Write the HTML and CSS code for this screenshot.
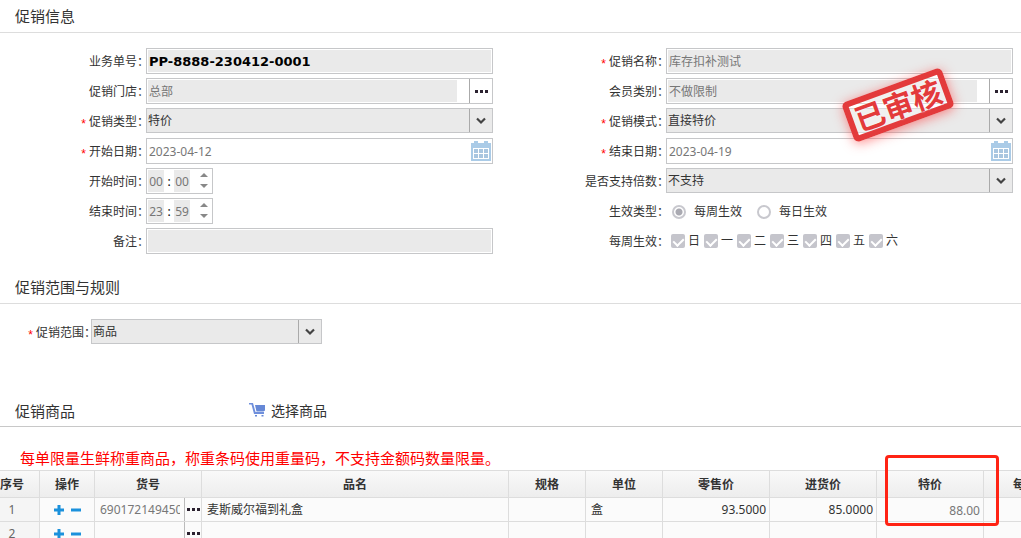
FILE: index.html
```html
<!DOCTYPE html>
<html lang="zh-CN">
<head>
<meta charset="utf-8">
<title>促销单</title>
<link rel="stylesheet" href="styles.css">
</head>
<body>
<svg class="defs" aria-hidden="true">
  <symbol id="chevron" viewBox="0 0 10 8"><path d="M1 1.500 5 5.500 9 1.500" fill="none" stroke="#444" stroke-width="2.200"/></symbol>
  <symbol id="dots" viewBox="0 0 13 3"><path d="M0 0h3v3H0zM5 0h3v3H5zM10 0h3v3h-3z" fill="#2b2230"/></symbol>
  <symbol id="calendar" viewBox="0 0 20 20"><path d="M0 2h3V0h4v2h6V0h4v2h3v18H0z" fill="#aacbe7"/><path d="M2 7h16v11H2z" fill="#fff"/><path d="M3 8h4v4H3zM8 8h4v4H8zM13 8h4v4h-4zM3 13h4v4H3zM8 13h4v4H8zM13 13h4v4h-4z" fill="#a9c6e0"/></symbol>
  <symbol id="up" viewBox="0 0 8 4"><path d="M0 4 4 0l4 4z" fill="#888"/></symbol>
  <symbol id="down" viewBox="0 0 8 4"><path d="M0 0h8L4 4z" fill="#888"/></symbol>
  <symbol id="plus" viewBox="0 0 10 10"><path d="M3.500 0h3v3.500H10v3H6.500V10h-3V6.500H0v-3h3.500z" fill="#1b91dc"/></symbol>
  <symbol id="minus" viewBox="0 0 10 10"><path d="M0 3.500h10v3H0z" fill="#1b91dc"/></symbol>
</svg>

<main class="page">
  <section class="info">
    <h2 class="title">促销信息</h2>
    <form class="form">
      <div class="col">
        <div class="row"><label class="label" for="no">业务单号：</label><div class="box"><input class="fill strong" id="no" value="PP-8888-230412-0001" readonly></div></div>
        <div class="row"><label class="label" for="store">促销门店：</label><div class="box"><input class="fill" id="store" value="总部" readonly><button class="more" type="button" aria-label="选择门店"><svg class="dots"><use href="#dots"/></svg></button></div></div>
        <div class="row"><label class="label" for="type"><span class="req">*</span>促销类型：</label><div class="pick"><select class="select" id="type"><option>特价</option></select><span class="arrow"><svg class="chevron"><use href="#chevron"/></svg></span></div></div>
        <div class="row"><label class="label" for="start"><span class="req">*</span>开始日期：</label><div class="box"><input class="fill plain" id="start" value="2023-04-12" readonly><button class="date" type="button" aria-label="选择开始日期"><svg class="cal"><use href="#calendar"/></svg></button></div></div>
        <div class="row"><label class="label" for="sh">开始时间：</label><div class="box time"><input class="num" id="sh" value="00" readonly><span class="sep">:</span><input class="num" aria-label="开始分钟" value="00" readonly><span class="spin"><button type="button" aria-label="增加"><svg><use href="#up"/></svg></button><button type="button" aria-label="减少"><svg><use href="#down"/></svg></button></span></div></div>
        <div class="row"><label class="label" for="eh">结束时间：</label><div class="box time"><input class="num" id="eh" value="23" readonly><span class="sep">:</span><input class="num" aria-label="结束分钟" value="59" readonly><span class="spin"><button type="button" aria-label="增加"><svg><use href="#up"/></svg></button><button type="button" aria-label="减少"><svg><use href="#down"/></svg></button></span></div></div>
        <div class="row"><label class="label" for="memo">备注：</label><div class="box"><input class="fill" id="memo" readonly></div></div>
      </div>
      <div class="col">
        <div class="row"><label class="label" for="name"><span class="req">*</span>促销名称：</label><div class="box"><input class="fill" id="name" value="库存扣补测试" readonly></div></div>
        <div class="row"><label class="label" for="member">会员类别：</label><div class="box"><input class="fill" id="member" value="不做限制" readonly><button class="more" type="button" aria-label="选择会员类别"><svg class="dots"><use href="#dots"/></svg></button></div></div>
        <div class="row"><label class="label" for="mode"><span class="req">*</span>促销模式：</label><div class="pick"><select class="select" id="mode"><option>直接特价</option></select><span class="arrow"><svg class="chevron"><use href="#chevron"/></svg></span></div></div>
        <div class="row"><label class="label" for="end"><span class="req">*</span>结束日期：</label><div class="box"><input class="fill plain" id="end" value="2023-04-19" readonly><button class="date" type="button" aria-label="选择结束日期"><svg class="cal"><use href="#calendar"/></svg></button></div></div>
        <div class="row"><label class="label" for="multi">是否支持倍数：</label><div class="pick"><select class="select" id="multi"><option>不支持</option></select><span class="arrow"><svg class="chevron"><use href="#chevron"/></svg></span></div></div>
        <div class="row"><span class="label">生效类型：</span><div class="radios"><label><input class="radio" type="radio" name="effect" checked disabled>每周生效</label><label><input class="radio" type="radio" name="effect" disabled>每日生效</label></div></div>
        <div class="row"><span class="label">每周生效：</span><div class="days"><label><input class="check" type="checkbox" checked disabled>日</label><label><input class="check" type="checkbox" checked disabled>一</label><label><input class="check" type="checkbox" checked disabled>二</label><label><input class="check" type="checkbox" checked disabled>三</label><label><input class="check" type="checkbox" checked disabled>四</label><label><input class="check" type="checkbox" checked disabled>五</label><label><input class="check" type="checkbox" checked disabled>六</label></div></div>
      </div>
    </form>
    <div class="stamp">已审核</div>
  </section>

  <section class="scope">
    <h2 class="title">促销范围与规则</h2>
    <div class="row range"><label class="label" for="range"><span class="req">*</span>促销范围：</label><div class="pick"><select class="select" id="range"><option>商品</option></select><span class="arrow"><svg class="chevron"><use href="#chevron"/></svg></span></div></div>
  </section>

  <section class="goods">
    <header class="title goods-head"><h2 class="goods-name">促销商品</h2><button class="choose" type="button"><svg class="cart" viewBox="0 0 17 14"><path d="M0 0h4l2.500 9H15v2H5L2.500 1.500H0z" fill="#6f8fdc"/><path d="M6 2h10v5.500L14.500 8.500h-7z" fill="#6688d6"/><path d="M6 12h2v1.500H6zM12.500 12h2v1.500h-2z" fill="#6688d6"/></svg>选择商品</button></header>
    <p class="notice">每单限量生鲜称重商品，称重条码使用重量码，不支持金额码数量限量。</p>
    <table class="grid">
      <colgroup><col class="w-no"><col class="w-op"><col class="w-price"><col class="w-name"><col class="w-unit"><col class="w-unit"><col class="w-price"><col class="w-price"><col class="w-price"><col class="w-price"></colgroup>
      <thead><tr><th class="idx">序号</th><th>操作</th><th>货号</th><th>品名</th><th>规格</th><th>单位</th><th>零售价</th><th>进货价</th><th>特价</th><th>每单限量</th></tr></thead>
      <tbody>
        <tr><td class="idx">1</td><td><div class="ops"><button type="button" aria-label="添加"><svg><use href="#plus"/></svg></button><button type="button" aria-label="删除"><svg><use href="#minus"/></svg></button></div></td><td class="code"><div class="code-box"><input class="code-input" aria-label="货号" value="6901721494506" readonly><button class="code-more" type="button" aria-label="选择商品"><svg class="dots"><use href="#dots"/></svg></button></div></td><td>麦斯威尔福到礼盒</td><td></td><td>盒</td><td class="money">93.5000</td><td class="money">85.0000</td><td class="money soft">88.00</td><td></td></tr>
        <tr><td class="idx">2</td><td><div class="ops"><button type="button" aria-label="添加"><svg><use href="#plus"/></svg></button><button type="button" aria-label="删除"><svg><use href="#minus"/></svg></button></div></td><td class="code"><div class="code-box"><input class="code-input" aria-label="货号" readonly><button class="code-more" type="button" aria-label="选择商品"><svg class="dots"><use href="#dots"/></svg></button></div></td><td></td><td></td><td></td><td></td><td></td><td></td><td></td></tr>
      </tbody>
    </table>
    <div class="mark"></div>
  </section>
</main>
</body>
</html>
```
FILE: styles.css
```css
* { box-sizing: border-box; }
body {
  margin: 0;
  background: #fff;
  color: #333;
  font: 12px/18px "Noto Sans", "Noto Sans CJK SC", sans-serif;
}
.defs { position: absolute; width: 0; height: 0; }
.page { height: 100vh; overflow: hidden; }
svg { display: block; }
input, select, button { font: inherit; color: inherit; margin: 0; }
button { border: 0; padding: 0; background: none; }

.title {
  margin: 0;
  height: 33px;
  padding-left: 15px;
  border-bottom: 1px solid #ddd;
  font-size: 15px;
  font-weight: 400;
  line-height: 32px;
}

/* Form */
.info { position: relative; }
.form {
  display: grid;
  grid-template-columns: 1fr 1fr;
  gap: 27px;
  padding: 15px 8px 13px 0;
}
.row {
  display: grid;
  grid-template-columns: 146px 1fr;
  align-items: start;
  height: 30px;
}
.label {
  margin-right: -3px;
  line-height: 27px;
  text-align: right;
  white-space: nowrap;
}
.req {
  margin-right: 3px;
  color: #f00;
  font: 12px/18px "Liberation Sans", sans-serif;
  vertical-align: -2px;
}
.box {
  display: flex;
  height: 26px;
  padding: 1px;
  border: 1px solid #c6c7c9;
  background: #fff;
}
.fill {
  flex: 1;
  min-width: 0;
  border: 0;
  padding: 2px 1px 0;
  background: #eaeaea;
  color: #777;
}
.plain { background: #fff; }
.strong {
  padding-top: 1px;
  color: #000;
  font: bold 13px/18px "DejaVu Sans", sans-serif;
}
.more {
  display: grid;
  place-items: center;
  width: 23px;
  margin: -1px -1px -1px 12px;
  border-left: 1px solid #aaa;
}
.dots { width: 13px; height: 3px; }
.date { width: 20px; }
.cal { width: 20px; height: 20px; }

.pick { position: relative; height: 25px; }
.select {
  appearance: none;
  width: 100%;
  height: 25px;
  padding: 1px 24px 0 1px;
  border: 1px solid #c6c7c9;
  border-radius: 0;
  background: #eaeaea;
}
.arrow {
  position: absolute;
  inset: 1px 1px 1px auto;
  display: grid;
  place-items: center;
  width: 23px;
  border-left: 1px solid #aaa;
  pointer-events: none;
}
.chevron { width: 10px; height: 8px; }

.time { width: 67px; }
.num {
  width: 16px;
  border: 0;
  padding: 2px 0 0;
  background: #eaeaea;
  color: #777;
  text-align: center;
}
.sep { width: 10px; color: #000; line-height: 24px; text-align: center; }
.spin { display: grid; align-content: center; gap: 7px; margin-left: 10px; padding-bottom: 2px; }
.spin svg { width: 8px; height: 4px; }

.radios { display: flex; gap: 15px; padding: 5px 0 0 6px; }
.radios label, .days label { display: flex; align-items: center; }
.radio {
  appearance: none;
  width: 14px;
  height: 14px;
  margin-right: 8px;
  border: 2px solid #c8c8ce;
  border-radius: 50%;
}
.radio:checked { background: radial-gradient(circle, #aaaab2 3px, #fff 4px); }
.days { display: flex; gap: 4px; padding: 4px 0 0 5px; }
.check {
  appearance: none;
  display: grid;
  place-items: start center;
  width: 14px;
  height: 14px;
  margin-right: 3px;
  padding-top: 2px;
  border-radius: 2px;
  background: #c5c5cc;
}
.check::after {
  content: "";
  width: 5px;
  height: 8px;
  border: solid #fff;
  border-width: 0 2px 2px 0;
  transform: rotate(45deg);
}

/* Approval stamp lying over the form */
.stamp {
  position: absolute;
  top: 84px;
  right: 70px;
  width: 106px;
  height: 42px;
  border: 6px solid #e33a3b;
  border-radius: 5px;
  background: rgba(255, 255, 255, .3);
  box-shadow: 0 2px 12px rgba(255, 60, 60, .6);
  color: #e33a3b;
  font: 700 30px/29px "Noto Sans CJK SC", sans-serif;
  text-align: center;
  text-shadow: 0 0 2px #fff;
  transform: rotate(-20deg);
}

/* Scope */
.range {
  grid-template-columns: 93px 231px;
  height: 90px;
  padding-top: 15px;
}
.range .pick { margin-left: -2px; margin-right: 2px; }

/* Goods */
.goods { position: relative; }
.goods-head { display: flex; align-items: center; padding-top: 1px; border-color: #c8c8c8; }
.goods-name { margin: 0; width: 234px; font-size: 15px; font-weight: 400; }
.choose { display: flex; gap: 5px; font-size: 14px; line-height: 20px; }
.cart { width: 17px; height: 14px; margin-top: 2px; }
.notice {
  margin: 0;
  padding: 20px 20px 0;
  color: #f00;
  font-size: 15px;
  line-height: 23px;
}
.grid {
  table-layout: fixed;
  width: 1091px;
  border-spacing: 0;
  border-top: 1px solid #ddd;
}
.w-no { width: 40px; }
.w-op { width: 55px; }
.w-price { width: 107px; }
.w-name { width: 307px; }
.w-unit { width: 77px; }
th, td {
  height: 24px;
  padding: 0 5px;
  border: solid #ddd;
  border-width: 0 1px 1px 0;
  background: #fbfbfb;
  line-height: 18px;
  white-space: nowrap;
}
th { height: 27px; padding-top: 2px; background: linear-gradient(#f9f9f9, #ededed); }
.idx { padding: 0 15px 0 0; text-align: center; }
th.idx { padding-top: 2px; }
td.idx { background: #f5f5f5; color: #666; }
.money { padding-right: 3px; text-align: right; }
.soft { padding-top: 2px; color: #777; }
.ops { display: flex; justify-content: center; gap: 7px; }
.ops svg { width: 10px; height: 10px; }
.code { padding: 0; }
.code-box { display: flex; height: 23px; }
.code-input {
  width: 80px;
  margin: 0 4px 0 5px;
  padding: 0;
  border: 0;
  background: none;
  color: #777;
}
.code-more {
  display: grid;
  place-items: center;
  flex: 1;
  border-left: 1px solid #bbb;
}

/* Highlight frame over the special-price column */
.mark {
  position: absolute;
  top: 61px;
  left: 885px;
  width: 114px;
  height: 71px;
  border: 3px solid #ff2314;
  border-radius: 4px;
}
```
